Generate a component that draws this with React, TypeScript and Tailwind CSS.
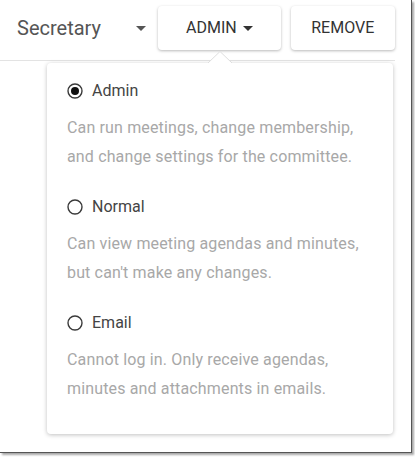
// Committee member role picker with an open permissions popover.

import React from 'react';

const ROLES = [
  {
    name: 'Admin',
    lines: ['Can run meetings, change membership,', 'and change settings for the committee.'],
    checked: true,
  },
  {
    name: 'Normal',
    lines: ['Can view meeting agendas and minutes,', "but can't make any changes."],
    checked: false,
  },
  {
    name: 'Email',
    lines: ['Cannot log in. Only receive agendas,', 'minutes and attachments in emails.'],
    checked: false,
  },
];

const Caret: React.FC<{ className?: string }> = ({ className }) => (
  <svg width="10" height="5" viewBox="0 0 10 5" className={className} aria-hidden="true">
    <path d="M0 0 L10 0 L5 5 Z" fill="currentColor" />
  </svg>
);

const Radio: React.FC<{ checked: boolean }> = ({ checked }) => (
  <svg width="16" height="16" viewBox="0 0 16 16" className="shrink-0" aria-hidden="true">
    <circle cx="8" cy="8" r="7" fill="white" stroke="#3a3a3a" strokeWidth="1.4" />
    {checked && <circle cx="8" cy="8" r="4" fill="#111" />}
  </svg>
);

const RoleOption: React.FC<{ name: string; lines: string[]; checked: boolean }> = ({ name, lines, checked }) => (
  <div className="flex flex-col">
    <label className="flex h-5 items-center gap-[9px] text-[16px] text-[#444]">
      <Radio checked={checked} />
      {name}
    </label>
    <p className="mt-3 text-[16px] leading-[29px] tracking-[0.15px] text-[#a8a8a8]">
      {lines[0]}
      <br />
      {lines[1]}
    </p>
  </div>
);

export default function App() {
  return (
    <div className="h-[457px] w-[415px] bg-white" style={{ fontFamily: 'Roboto, "Liberation Sans", sans-serif' }}>
      <div className="h-[453px] w-[412px] border-r border-b border-[#555] shadow-[2px_2px_2px_rgba(0,0,0,0.35)]">
        <div className="flex h-[61px] w-[395px] items-start border-b border-[#e3e3e3] pt-[6px]">
          <div className="flex h-[44px] w-[159px] items-center pl-[17px]">
            <span className="text-[20px] text-[#555]">Secretary</span>
            <Caret className="ml-auto mr-[12px] text-[#555]" />
          </div>
          <button className="relative flex h-[44px] w-[123px] items-center justify-center gap-[6px] rounded-[4px] bg-white text-[16px] text-[#333] shadow-[0_1px_3px_rgba(0,0,0,0.28)]">
            ADMIN
            <Caret className="text-[#333]" />
            <svg
              width="24"
              height="13"
              viewBox="0 0 24 13"
              className="absolute top-[45px] left-[50px] z-10"
              aria-hidden="true"
            >
              <path d="M0 12 L12 0.5 L24 12 Z" fill="white" />
              <path d="M0 12 L12 0.5 L24 12" fill="none" stroke="#dedede" strokeWidth="1" />
            </svg>
          </button>
          <button className="ml-[10px] flex h-[44px] w-[105px] items-center justify-center rounded-[4px] bg-white text-[16px] text-[#333] shadow-[0_1px_3px_rgba(0,0,0,0.28)]">
            REMOVE
          </button>
        </div>
        <div className="ml-[47px] mt-[2px] flex w-[346px] flex-col gap-[26px] rounded-[4px] bg-white pt-[18px] pr-5 pb-[31px] pl-5 shadow-[0_1px_4px_rgba(0,0,0,0.25)]">
          {ROLES.map((r) => (
            <RoleOption key={r.name} {...r} />
          ))}
        </div>
      </div>
    </div>
  );
}
